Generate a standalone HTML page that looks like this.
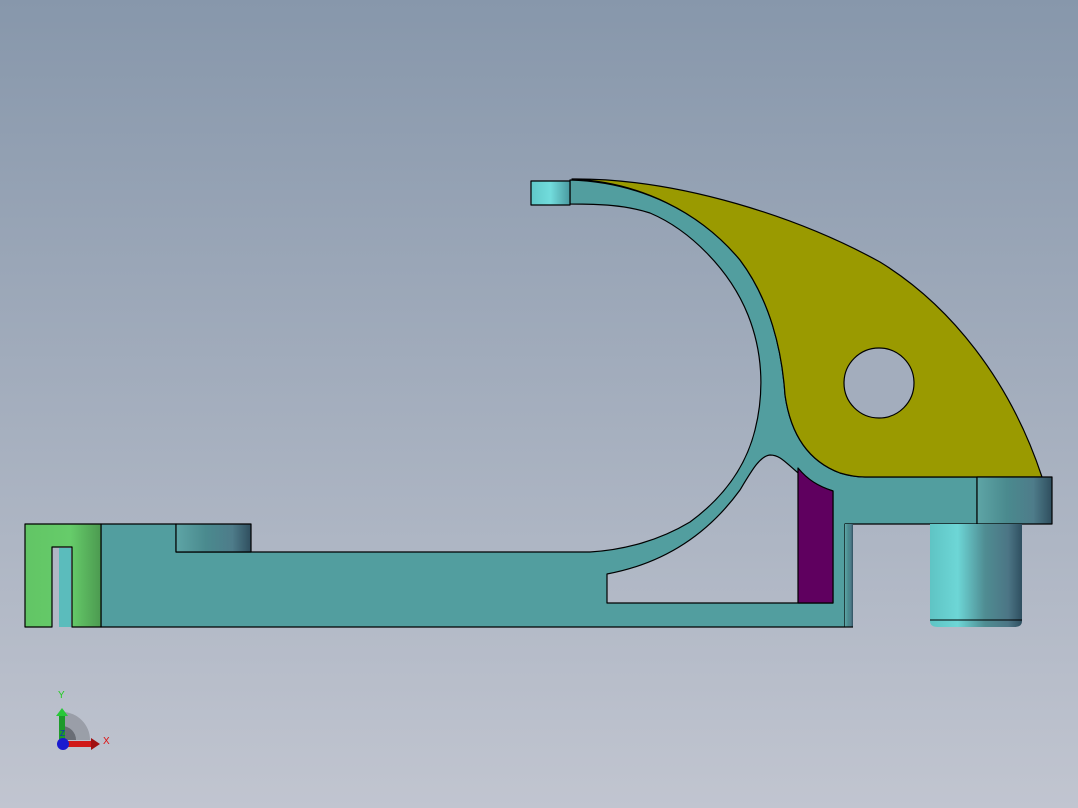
<!DOCTYPE html>
<html><head><style>html,body{margin:0;padding:0}body{width:1078px;height:808px;overflow:hidden;background:linear-gradient(#8797ab,#c1c5d0)}svg{display:block}</style></head><body>
<svg width="1078" height="808" viewBox="0 0 1078 808" xmlns="http://www.w3.org/2000/svg">
<defs>
<linearGradient id="g1" x1="0" x2="1"><stop offset="0" stop-color="#5ea5a6"/><stop offset="0.4" stop-color="#4a8a8e"/><stop offset="0.75" stop-color="#4e7c8a"/><stop offset="1" stop-color="#2f4e5e"/></linearGradient>
<linearGradient id="gc" x1="0" x2="1"><stop offset="0" stop-color="#5fc4c4"/><stop offset="0.3" stop-color="#6dd6d6"/><stop offset="0.6" stop-color="#4f8c92"/><stop offset="0.85" stop-color="#4c7585"/><stop offset="1" stop-color="#2f4f60"/></linearGradient>
<linearGradient id="gg" x1="0" x2="1"><stop offset="0" stop-color="#62c565"/><stop offset="0.6" stop-color="#66cc6a"/><stop offset="1" stop-color="#4c9a50"/></linearGradient>
<linearGradient id="gt" x1="0" x2="1"><stop offset="0" stop-color="#60c8c8"/><stop offset="0.5" stop-color="#72dcdc"/><stop offset="1" stop-color="#4a9aa0"/></linearGradient>
</defs>
<g stroke="#000" stroke-width="1.2" stroke-linejoin="round">
<path fill="#529e9f" fill-rule="evenodd" d="M101,524 L176,524 L176,552 L590,552 C625,550 660,540 690,522 C720,500 745,470 755,430 C765,390 762,350 748,315 C730,270 690,230 650,213 C625,205 600,204 570,204 L570,180 C640,182 700,212 740,260 C770,300 782,350 785,395 C790,430 805,460 840,473 C850,476 858,477 865,477 L977,477 L977,524 L845,524 L845,627 L101,627 Z
M607,574 C650,566 700,545 740,490 C752,470 760,456 770,455 C780,455 785,462 797,472 C808,482 818,486 833,491 L833,603 L607,603 Z"/>
<path fill="#5f005f" d="M798,468 C808,480 818,486 833,491 L833,603 L798,603 Z"/>
<path fill="#9a9a00" d="M572,179 C680,178 800,218 880,262 C950,305 1010,380 1042,477 L865,477 C858,477 850,476 840,473 C805,460 790,430 785,395 C782,350 770,300 740,260 C700,212 640,182 572,179 Z"/>
<circle cx="879" cy="383" r="35" fill="#a3adbd"/>
<rect x="531" y="181" width="39" height="24" fill="url(#gt)"/>
<rect x="977" y="477" width="75" height="47" fill="url(#g1)"/>
<rect x="845" y="524" width="8" height="103" fill="url(#g1)" stroke="none"/>
<line x1="845" y1="627" x2="853" y2="627"/>
<path fill="url(#gc)" d="M930,524 L1022,524 L1022,621 Q1022,627 1014,627 L938,627 Q930,627 930,621 Z" stroke="none"/>
<line x1="930" y1="620" x2="1022" y2="620" stroke-width="1"/>
<rect x="176" y="524" width="75" height="28" fill="url(#g1)"/>
<path fill="url(#gg)" d="M25,524 L101,524 L101,627 L72,627 L72,547 L52,547 L52,627 L25,627 Z"/>
<rect x="59" y="548" width="12" height="79" fill="#5bbcbc" stroke="none"/>
</g>
<g>
<path d="M62,740 L62,712 A28,28 0 0 1 90,740 Z" fill="#8c9099" opacity="0.7"/>
<path d="M62,740 L62,726 A14,14 0 0 1 76,740 Z" fill="#5c6068" opacity="0.8"/>
<rect x="59" y="714" width="6" height="26" fill="#1d9a2a"/>
<path d="M56,716 L62,708 L68,716 Z" fill="#28c838"/>
<rect x="62" y="741" width="30" height="6" fill="#d01818"/>
<path d="M91,738 L100,744 L91,750 Z" fill="#a01010"/>
<circle cx="63" cy="744" r="6" fill="#1a1ad0"/>
<text x="58" y="698" font-family="Liberation Sans, sans-serif" font-size="10" fill="#22cc22">Y</text>
<text x="103" y="744" font-family="Liberation Sans, sans-serif" font-size="10" fill="#dd1111">X</text>
<text x="60" y="736" font-family="Liberation Sans, sans-serif" font-size="8" fill="#1a1ad0">Z</text>
</g>
</svg>
</body></html>
